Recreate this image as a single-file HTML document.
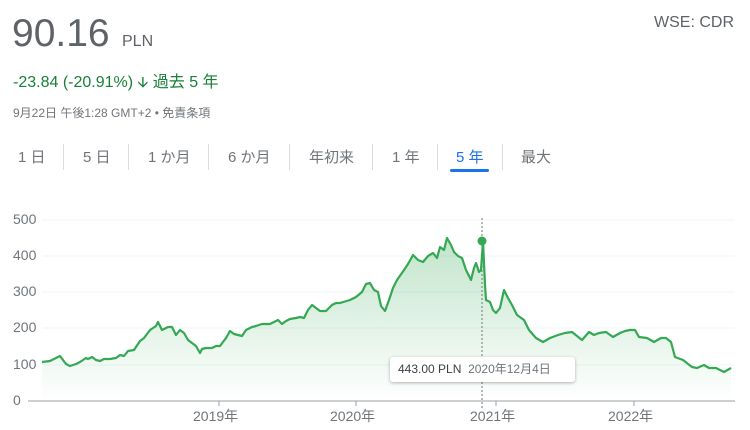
<!DOCTYPE html>
<html><head><meta charset="utf-8"><style>
body{margin:0;width:750px;height:430px;background:#fff;font-family:"Liberation Sans","Noto Sans CJK JP",sans-serif;position:relative;overflow:hidden}
.a{position:absolute;white-space:nowrap}
.tab{position:absolute;top:146px;font-size:15px;color:#70757a}
.sep{position:absolute;top:144px;width:1px;height:26px;background:#dadce0}
.yl{position:absolute;left:13px;font-size:14px;color:#70757a}
.xl{position:absolute;top:406px;font-size:14px;color:#70757a}
</style></head><body>
<div class="a" style="left:12px;top:12px;font-size:39px;color:#5f6368;line-height:44px">90.16</div>
<div class="a" style="left:122px;top:33px;font-size:16px;color:#5f6368">PLN</div>
<div class="a" style="right:16px;top:14px;font-size:16px;color:#5f6368">WSE: CDR</div>
<div class="a" style="left:13px;top:68px;font-size:16px;color:#188038">-23.84 (-20.91%) <span style="font-size:15px">🡫</span> 過去 5 年</div>
<div class="a" style="left:13px;top:104px;font-size:12px;color:#70757a">9月22日 午後1:28 GMT+2 • 免責条項</div>
<div class="tab" style="left:18px">1 日</div><div class="sep" style="left:63px"></div>
<div class="tab" style="left:83px">5 日</div><div class="sep" style="left:128px"></div>
<div class="tab" style="left:148px">1 か月</div><div class="sep" style="left:208px"></div>
<div class="tab" style="left:228px">6 か月</div><div class="sep" style="left:289px"></div>
<div class="tab" style="left:309px">年初来</div><div class="sep" style="left:372px"></div>
<div class="tab" style="left:392px">1 年</div><div class="sep" style="left:437px"></div>
<div class="tab" style="left:456px;color:#1a73e8">5 年</div><div class="sep" style="left:502px"></div>
<div class="tab" style="left:521px">最大</div>
<div class="a" style="left:450px;top:169px;width:39px;height:3px;background:#1a73e8;border-radius:2px"></div>
<div class="yl" style="top:211px">500</div><div class="yl" style="top:247px">400</div><div class="yl" style="top:283px">300</div><div class="yl" style="top:319px">200</div><div class="yl" style="top:356px">100</div><div class="yl" style="top:392px;left:13px">0</div>
<div class="xl" style="left:193px">2019年</div><div class="xl" style="left:330px">2020年</div><div class="xl" style="left:470px">2021年</div><div class="xl" style="left:608px">2022年</div>
<svg class="a" style="left:0;top:0" width="750" height="430">
<defs><linearGradient id="g" gradientUnits="userSpaceOnUse" x1="0" y1="240" x2="0" y2="401"><stop offset="0" stop-color="#34a853" stop-opacity=".3"/><stop offset="1" stop-color="#34a853" stop-opacity="0"/></linearGradient></defs>
<g stroke="#f1f3f4" stroke-width="1"><line x1="42" x2="735" y1="220" y2="220"/><line x1="42" x2="735" y1="256" y2="256"/><line x1="42" x2="735" y1="292" y2="292"/><line x1="42" x2="735" y1="328" y2="328"/><line x1="42" x2="735" y1="365" y2="365"/></g>
<line x1="28" x2="735" y1="401" y2="401" stroke="#9aa0a6" stroke-width="1"/>
<g stroke="#9aa0a6"><line x1="219" x2="219" y1="401" y2="406"/><line x1="356" x2="356" y1="401" y2="406"/><line x1="496" x2="496" y1="401" y2="406"/><line x1="634" x2="634" y1="401" y2="406"/></g>
<line x1="482" x2="482" y1="218" y2="410" stroke="#70757a" stroke-dasharray="2,2"/>
<polygon fill="url(#g)" points="42,401 42,362 50,361 56,358 60,356 66,364 70,366 76,364 80,362 86,358 88,359 92,357 96,360 100,361 104,359 110,359 116,358 120,355 124,356 128,351 134,350 140,341 144,338 150,330 156,326 158,322 162,330 168,327 172,327 176,335 180,330 184,333 188,340 192,343 196,346 200,353 202,349 206,348 212,348 216,346 220,346 226,338 230,331 234,334 238,335 242,336 246,330 252,327 256,326 262,324 270,324 274,322 278,320 282,324 286,321 290,319 296,318 300,317 304,318 308,310 312,305 316,308 320,311 326,311 332,305 336,303 340,303 350,300 356,297 362,292 366,284 370,283 374,290 378,292 381,306 385,311 389,300 393,288 397,280 404,270 408,264 413,255 418,260 423,262 428,256 433,253 437,258 440,247 444,250 447,238 451,245 454,252 458,256 462,258 466,270 471,280 474,268 476,263 479,272 481,270 483,241 485,285 486,300 490,302 493,310 496,313 500,308 504,290 508,298 512,305 517,315 524,320 529,330 536,338 543,342 550,338 558,335 565,333 572,332 577,336 582,340 589,332 594,335 599,333 606,332 613,337 620,333 625,331 630,330 635,330 639,337 647,338 654,342 661,338 666,338 671,342 675,357 683,360 692,367 697,368 704,365 709,368 716,368 724,372 731,368 731,401"/>
<polyline fill="none" stroke="#34a853" stroke-width="2.2" stroke-linejoin="round" points="42,362 50,361 56,358 60,356 66,364 70,366 76,364 80,362 86,358 88,359 92,357 96,360 100,361 104,359 110,359 116,358 120,355 124,356 128,351 134,350 140,341 144,338 150,330 156,326 158,322 162,330 168,327 172,327 176,335 180,330 184,333 188,340 192,343 196,346 200,353 202,349 206,348 212,348 216,346 220,346 226,338 230,331 234,334 238,335 242,336 246,330 252,327 256,326 262,324 270,324 274,322 278,320 282,324 286,321 290,319 296,318 300,317 304,318 308,310 312,305 316,308 320,311 326,311 332,305 336,303 340,303 350,300 356,297 362,292 366,284 370,283 374,290 378,292 381,306 385,311 389,300 393,288 397,280 404,270 408,264 413,255 418,260 423,262 428,256 433,253 437,258 440,247 444,250 447,238 451,245 454,252 458,256 462,258 466,270 471,280 474,268 476,263 479,272 481,270 483,241 485,285 486,300 490,302 493,310 496,313 500,308 504,290 508,298 512,305 517,315 524,320 529,330 536,338 543,342 550,338 558,335 565,333 572,332 577,336 582,340 589,332 594,335 599,333 606,332 613,337 620,333 625,331 630,330 635,330 639,337 647,338 654,342 661,338 666,338 671,342 675,357 683,360 692,367 697,368 704,365 709,368 716,368 724,372 731,368"/>
<circle cx="482" cy="241" r="4.5" fill="#34a853"/>
</svg>
<div class="a" style="left:390px;top:357px;width:185px;height:25px;background:#fff;border-radius:3px;box-shadow:0 1px 3px rgba(0,0,0,.3);font-size:12px;line-height:25px;color:#3c4043;text-indent:8px">443.00 PLN&nbsp;&nbsp;<span style="color:#70757a">2020年12月4日</span></div>
</body></html>
